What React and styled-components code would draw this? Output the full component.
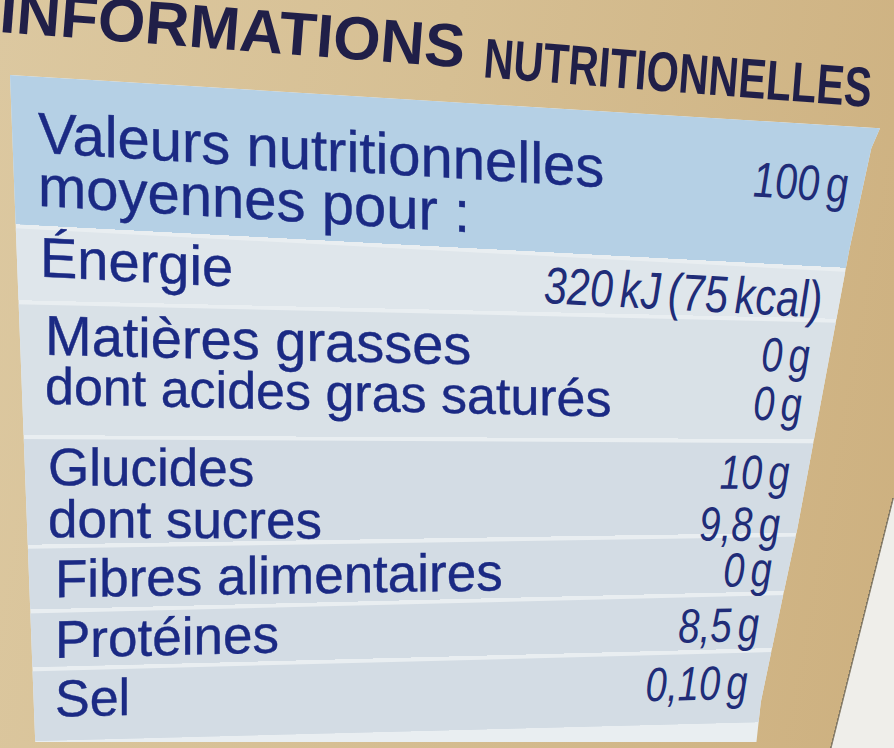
import React from 'react';
import styled, { createGlobalStyle } from 'styled-components';

const GlobalStyle = createGlobalStyle`
  html, body {
    margin: 0;
    padding: 0;
    background: #d6bf95;
  }
  body {
    font-family: "Liberation Sans", Arial, sans-serif;
  }
`;

const Page = styled.div`
  width: 894px;
  height: 748px;
  overflow: hidden;
  background-color: #d3bb8f;
  background-image:
    linear-gradient(104deg, transparent 51.6%, #7d735f 51.8%, #8f8674 52.6%, #efeeea 53.2%),
    linear-gradient(100deg, #dcc8a0 0%, #d6bf93 45%, #cdb07f 100%);
  background-size: 70px 250px, 100% 100%;
  background-position: right bottom, 0 0;
  background-repeat: no-repeat;
`;

const Title = styled.h1`
  margin: -19px 0 0 0;
  height: 61px;
  display: flex;
  align-items: flex-start;
  gap: 19px;
  white-space: nowrap;
  transform-origin: 0 31px;
  transform: rotate(4.4deg);
`;

const Word = styled.span`
  display: inline-block;
  padding-top: ${p => p.$drop}px;
  font-family: "Liberation Sans", Arial, sans-serif;
  font-weight: 700;
  font-size: ${p => p.$size}px;
  line-height: ${p => p.$size}px;
  color: #201f48;
  transform-origin: 0 0;
  transform: scaleX(${p => p.$squeeze});
`;

const PANEL_W = 870;

const Panel = styled.div`
  margin: 33px 0 0 10px;
  width: ${PANEL_W}px;
  height: 667px;
  display: flex;
  flex-direction: column;
  gap: 4px;
  background: #e9eef1;
  clip-path: polygon(0 0, 100% 8%, 99% 11%, 96.5% 26%, 90.5% 68%, 88.7% 79%, 86.3% 94%, 85.8% 100%, 2.9% 100%);
`;

const tones = {
  head: '#b5d0e5',
  light: '#dfe6eb',
  pale: '#d9e1e7',
  base: '#d3dce4',
};

// the band narrows towards the right, as the pot turns away
const Row = styled.div`
  position: relative;
  z-index: ${p => p.$layer};
  background: linear-gradient(${p => p.$angle}deg, ${p => tones[p.$tone]} ${p => p.$stop}%, transparent ${p => p.$stop}%);
  padding: ${p => p.$pt}px 0 ${p => p.$pb}px 0;
  transform-origin: 0 0;
  transform: skewY(${p => p.$tilt}deg);
  flex: ${p => (p.$grow ? 1 : 'none')};
`;

const Line = styled.div`
  display: flex;
  justify-content: space-between;
  align-items: baseline;
  padding: 0 ${p => p.$r}px 0 ${p => p.$l}px;
  height: ${p => p.$lh}px;
  line-height: ${p => p.$lh}px;
`;

const Label = styled.span`
  display: inline-block;
  font-family: "Liberation Sans", Arial, sans-serif;
  font-size: ${p => p.$size}px;
  color: #1b2a84;
  -webkit-text-stroke: 0.4px #1b2a84;
  white-space: nowrap;
`;

const Value = styled.span`
  display: inline-block;
  font-family: "Liberation Sans", Arial, sans-serif;
  font-style: italic;
  font-size: ${p => p.$size}px;
  line-height: 0.9;
  color: #202c78;
  white-space: nowrap;
  word-spacing: -0.12em;
  transform-origin: 100% 50%;
  transform: scaleX(0.8);
`;

const rows = [
  {
    tone: 'head', tilt: 3.5, pt: 29, pb: 14,
    lines: [
      { label: 'Valeurs nutritionnelles', value: '100 g', size: 58, vsize: 50, lh: 53, l: 28, r: 32 },
      { label: 'moyennes pour :', size: 58, lh: 53, l: 28, r: 32 },
    ],
  },
  {
    tone: 'light', tilt: 3, pt: 0, pb: 16,
    lines: [
      { label: 'Énergie', value: '320 kJ (75 kcal)', size: 56, vsize: 52, lh: 56, l: 30, r: 58 },
    ],
  },
  {
    tone: 'pale', tilt: 1.3, pt: 6, pb: 25,
    lines: [
      { label: 'Matières grasses', value: '0 g', size: 56, vsize: 48, lh: 50, l: 35, r: 70 },
      { label: 'dont acides gras saturés', value: '0 g', size: 52, vsize: 48, lh: 50, l: 35, r: 78 },
    ],
  },
  {
    tone: 'base', tilt: 0.3, pt: 2, pb: 0,
    lines: [
      { label: 'Glucides', value: '10 g', size: 53, vsize: 48, lh: 52, l: 38, r: 90 },
      { label: 'dont sucres', value: '9,8 g', size: 53, vsize: 48, lh: 52, l: 38, r: 100 },
    ],
  },
  {
    tone: 'base', tilt: -0.9, pt: 4, pb: 3,
    lines: [
      { label: 'Fibres alimentaires', value: '0 g', size: 53, vsize: 48, lh: 54, l: 45, r: 108 },
    ],
  },
  {
    tone: 'base', tilt: -1.4, pt: 3, pb: 3,
    lines: [
      { label: 'Protéines', value: '8,5 g', size: 53, vsize: 48, lh: 48, l: 45, r: 121 },
    ],
  },
  {
    tone: 'base', tilt: -1.5, pt: 2, pb: 14, grow: true,
    lines: [
      { label: 'Sel', value: '0,10 g', size: 52, vsize: 48, lh: 52, l: 45, r: 132 },
    ],
  },
];

const rad = deg => (deg * Math.PI) / 180;

// bottom edge of each band follows the slope of the band below it
const bandShape = (row, next) => {
  const height = row.pt + row.pb + row.lines.reduce((sum, l) => sum + l.lh, 0);
  const drop = next ? PANEL_W * (Math.tan(rad(row.tilt)) - Math.tan(rad(next.tilt))) : 0;
  const angle = 180 - (Math.atan(drop / PANEL_W) * 180) / Math.PI;
  const stop = next ? 50 + (50 * (height - drop)) / (height + drop) : 100;
  return { angle, stop };
};

export default function App() {
  return (
    <>
      <GlobalStyle />
      <Page>
        <Title>
          <Word $size={61} $drop={0} $squeeze={1}>INFORMATIONS</Word>
          <Word $size={56} $drop={12} $squeeze={0.74}>NUTRITIONNELLES</Word>
        </Title>
        <Panel>
          {rows.map((row, i) => {
            const { angle, stop } = bandShape(row, rows[i + 1]);
            return (
              <Row
                key={i}
                $layer={rows.length - i}
                $tone={row.tone}
                $tilt={row.tilt}
                $angle={angle}
                $stop={stop}
                $pt={row.pt}
                $pb={row.pb}
                $grow={row.grow}
              >
                {row.lines.map(line => (
                  <Line key={line.label} $l={line.l} $r={line.r} $lh={line.lh}>
                    <Label $size={line.size}>{line.label}</Label>
                    {line.value && <Value $size={line.vsize}>{line.value}</Value>}
                  </Line>
                ))}
              </Row>
            );
          })}
        </Panel>
      </Page>
    </>
  );
}
